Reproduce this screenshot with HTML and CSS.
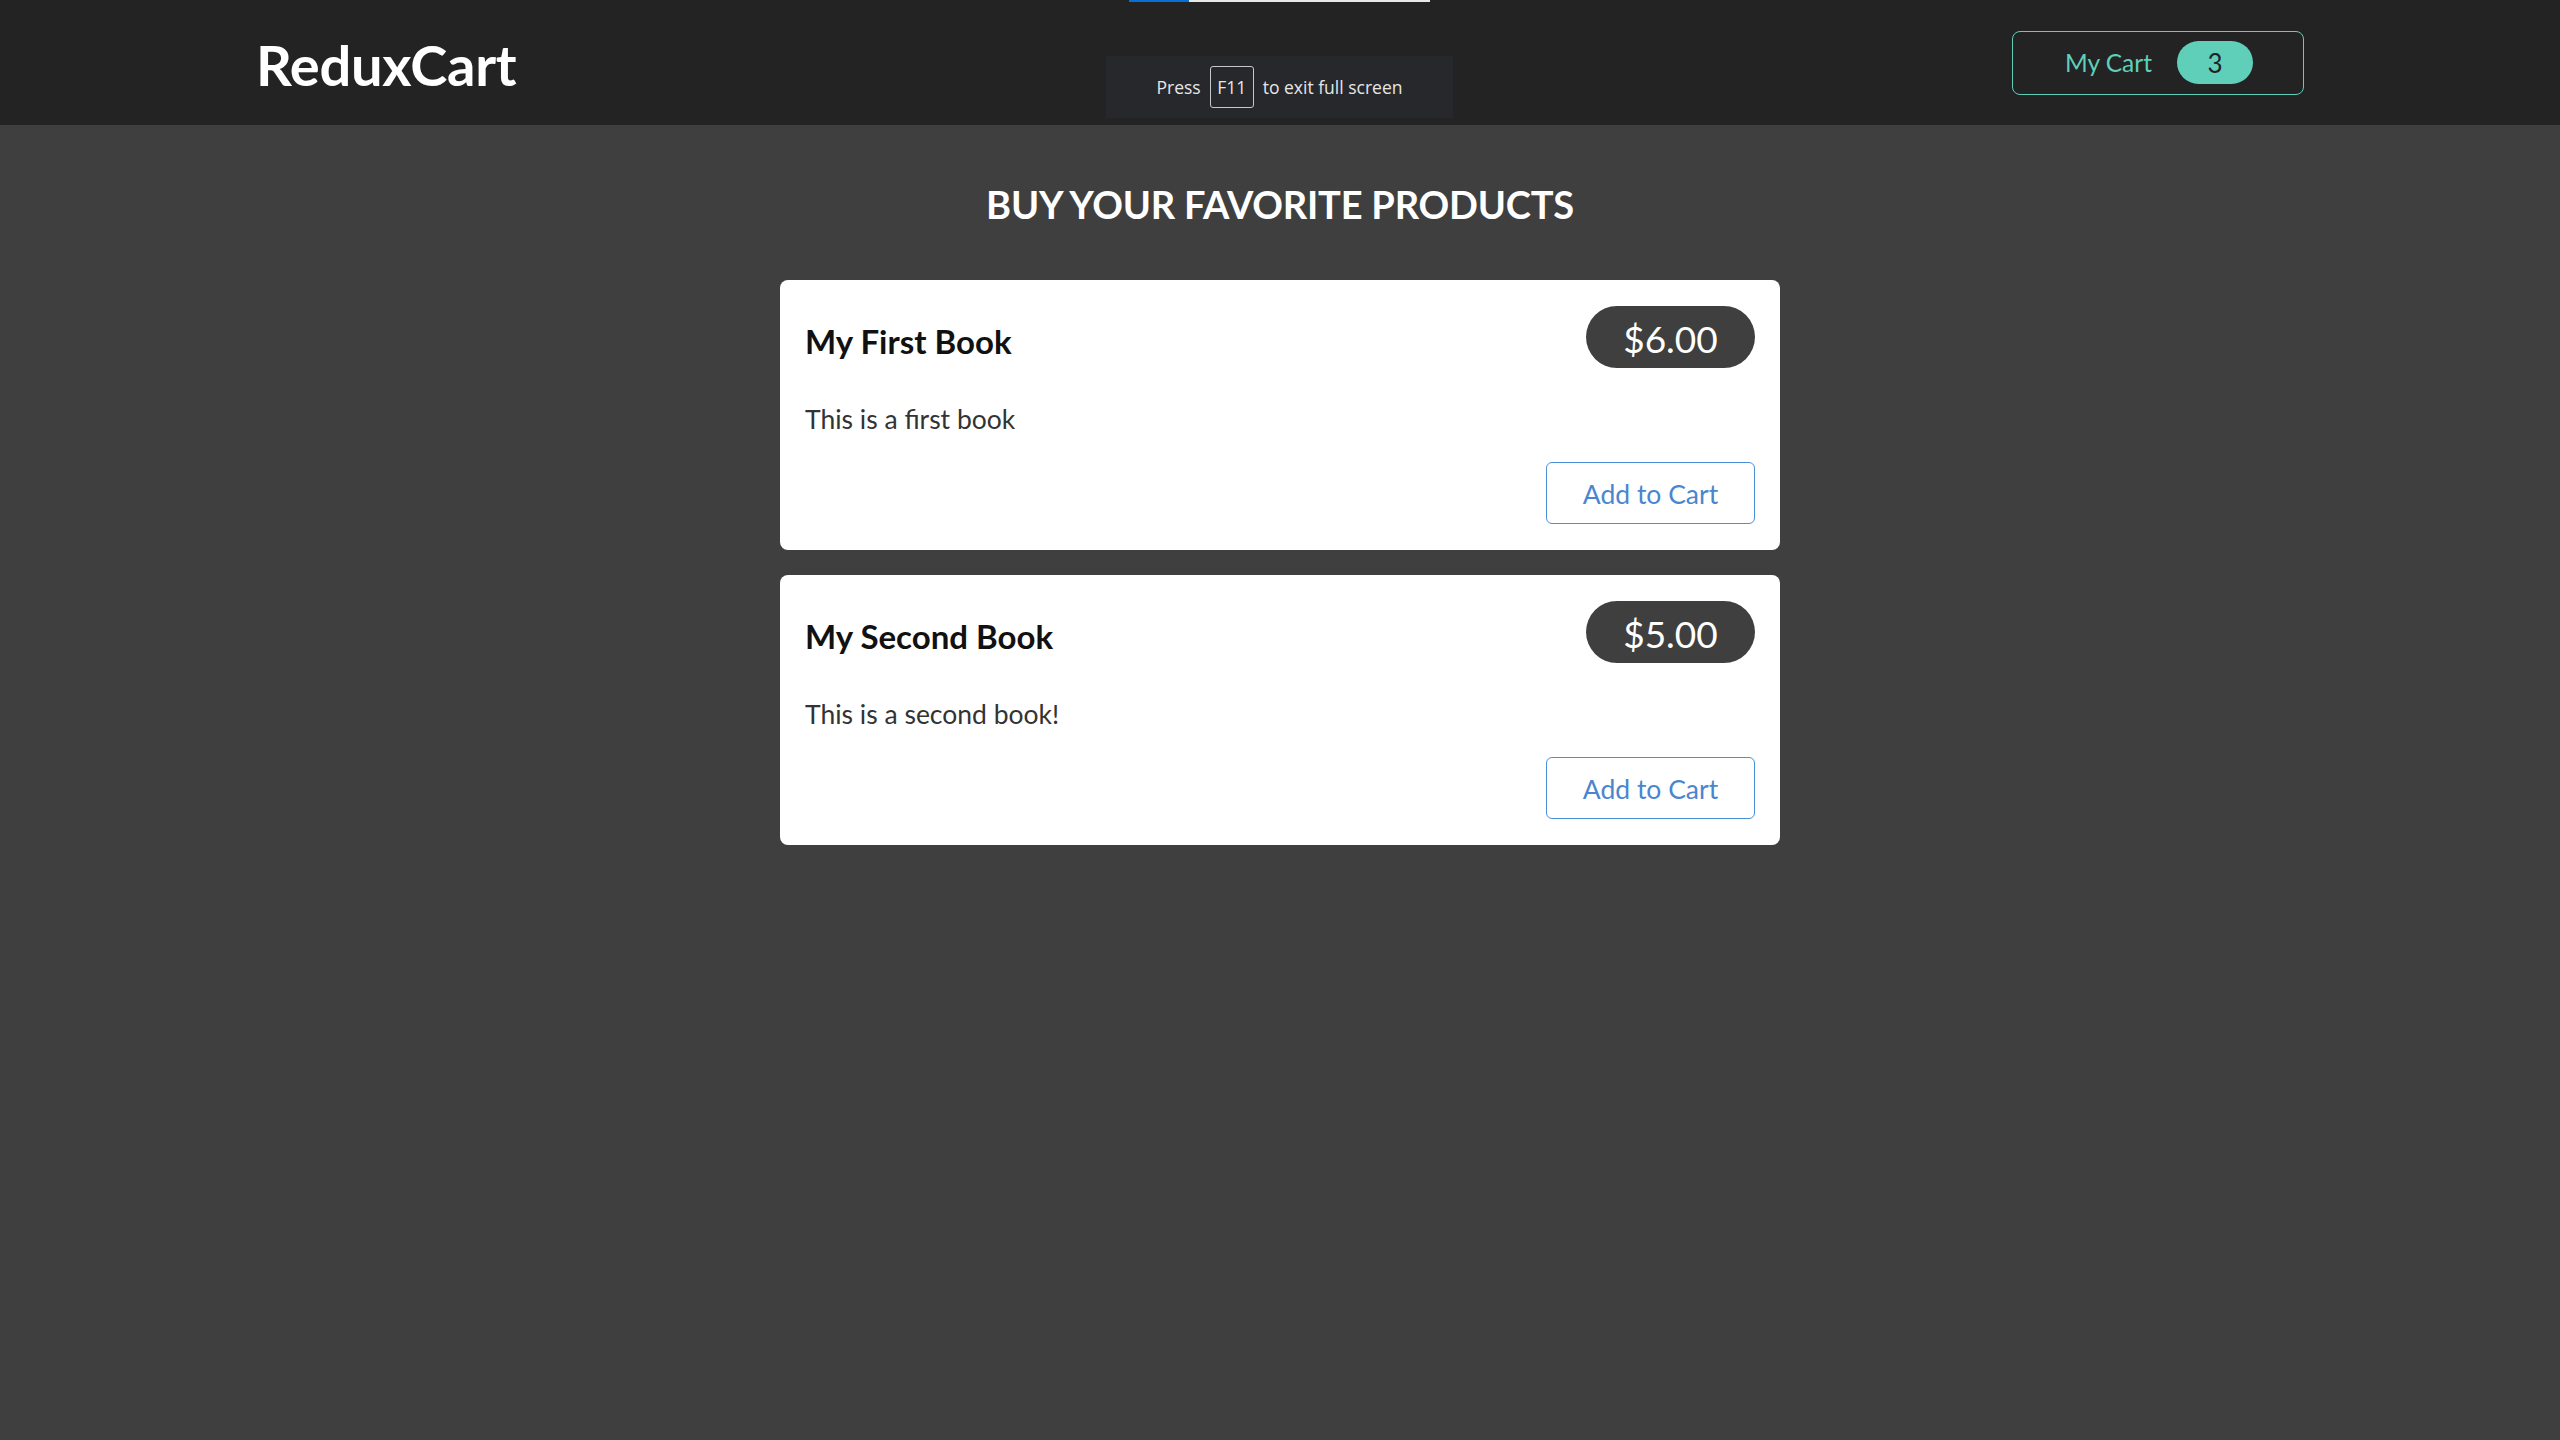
FILE: index.html
```html
<!DOCTYPE html>
<html lang="en">
<head>
<meta charset="utf-8">
<title>ReduxCart</title>
<link rel="stylesheet" href="styles.css">
</head>
<body>
<header class="header">
  <h1 class="logo">ReduxCart</h1>
  <nav>
    <button class="cart-button">
      <span>My Cart</span>
      <span class="cart-badge">3</span>
    </button>
  </nav>
</header>
<main class="main">
  <section class="products">
    <h2 class="products-title">Buy your favorite products</h2>
    <ul class="product-list">
      <li class="card">
        <header class="card-head">
          <h3 class="card-title">My First Book</h3>
          <div class="price">$6.00</div>
        </header>
        <p class="card-desc">This is a first book</p>
        <div class="card-actions">
          <button class="add-button">Add to Cart</button>
        </div>
      </li>
      <li class="card">
        <header class="card-head">
          <h3 class="card-title">My Second Book</h3>
          <div class="price">$5.00</div>
        </header>
        <p class="card-desc">This is a second book!</p>
        <div class="card-actions">
          <button class="add-button">Add to Cart</button>
        </div>
      </li>
    </ul>
  </section>
</main>
<div class="fs-bar"><span class="fs-bar-blue"></span><span class="fs-bar-rest"></span></div>
<div class="fs-toast"><span>Press</span><kbd class="fs-key">F11</kbd><span>to exit full screen</span></div>
</body>
</html>
```
FILE: styles.css
```css
* { box-sizing: border-box; }
html, body { margin: 0; padding: 0; }
body {
  background: #3f3f3f;
  font-family: Lato, "Liberation Sans", sans-serif;
  min-height: 1440px;
}
.header {
  height: 125px;
  background: #232323;
  padding: 0 10%;
  display: flex;
  justify-content: space-between;
  align-items: center;
}
.logo {
  margin: 0;
  color: #fff;
  font-size: 56px;
  font-weight: 700;
  line-height: 62px;
  padding-top: 4px;
  letter-spacing: -0.3px;
}
.cart-button {
  display: flex;
  align-items: center;
  gap: 25px;
  height: 64px;
  padding: 0 50px 0 52px;
  background: transparent;
  border: 1px solid #5fcfba;
  border-radius: 8px;
  color: #5fcfba;
  font-family: Lato, "Liberation Sans", sans-serif;
  font-size: 24.5px;
}
.cart-badge {
  width: 76px;
  height: 43px;
  border-radius: 22px;
  background: #5fcfba;
  color: #232323;
  display: flex;
  align-items: center;
  justify-content: center;
  font-size: 26px;
}
.main { padding-top: 56px; }
.products-title {
  margin: 0 0 53px;
  text-align: center;
  color: #fff;
  text-transform: uppercase;
  font-size: 38px;
  line-height: 46px;
  font-weight: 700;
  letter-spacing: -0.2px;
}
.product-list {
  list-style: none;
  margin: 0 auto;
  padding: 0;
  width: 1000px;
  display: flex;
  flex-direction: column;
  gap: 25px;
}
.card {
  background: #fff;
  border-radius: 8px;
  padding: 26px 25px;
}
.card-head {
  display: flex;
  justify-content: space-between;
  align-items: center;
  height: 62px;
}
.card-title {
  margin: 0;
  font-size: 33px;
  font-weight: 700;
  color: #111;
  padding-top: 8px;
}
.price {
  height: 62px;
  width: 169px;
  border-radius: 31px;
  background: #3f3f3f;
  color: #fff;
  font-size: 37px;
  display: flex;
  align-items: center;
  justify-content: center;
  padding-top: 2px;
}
.card-desc {
  margin: 33px 0 0;
  font-size: 26.5px;
  line-height: 36px;
  color: #333;
}
.card-actions {
  margin-top: 25px;
  display: flex;
  justify-content: flex-end;
}
.add-button {
  width: 209px;
  height: 62px;
  background: #fff;
  border: 1px solid #4a90d9;
  border-radius: 6px;
  color: #4a86cf;
  font-family: Lato, "Liberation Sans", sans-serif;
  font-size: 26.5px;
  padding-top: 2px;
}
.fs-bar {
  position: absolute;
  top: 0;
  left: 1129px;
  display: flex;
  height: 2px;
}
.fs-bar-blue { width: 60px; background: #0a6fd4; }
.fs-bar-rest { width: 241px; background: #e8e8e8; }
.fs-toast {
  position: absolute;
  top: 56px;
  left: 1106px;
  width: 347px;
  height: 62px;
  background: #27282c;
  color: #e6e6e6;
  font-family: "Open Sans", "Noto Sans", sans-serif;
  font-size: 17.5px;
  display: flex;
  align-items: center;
  justify-content: center;
  gap: 9px;
}
.fs-key {
  font-family: "Open Sans", "Noto Sans", sans-serif;
  font-size: 17.5px;
  width: 44px;
  height: 42px;
  border: 1px solid #c8c8c8;
  border-radius: 3px;
  display: flex;
  align-items: center;
  justify-content: center;
}
```
